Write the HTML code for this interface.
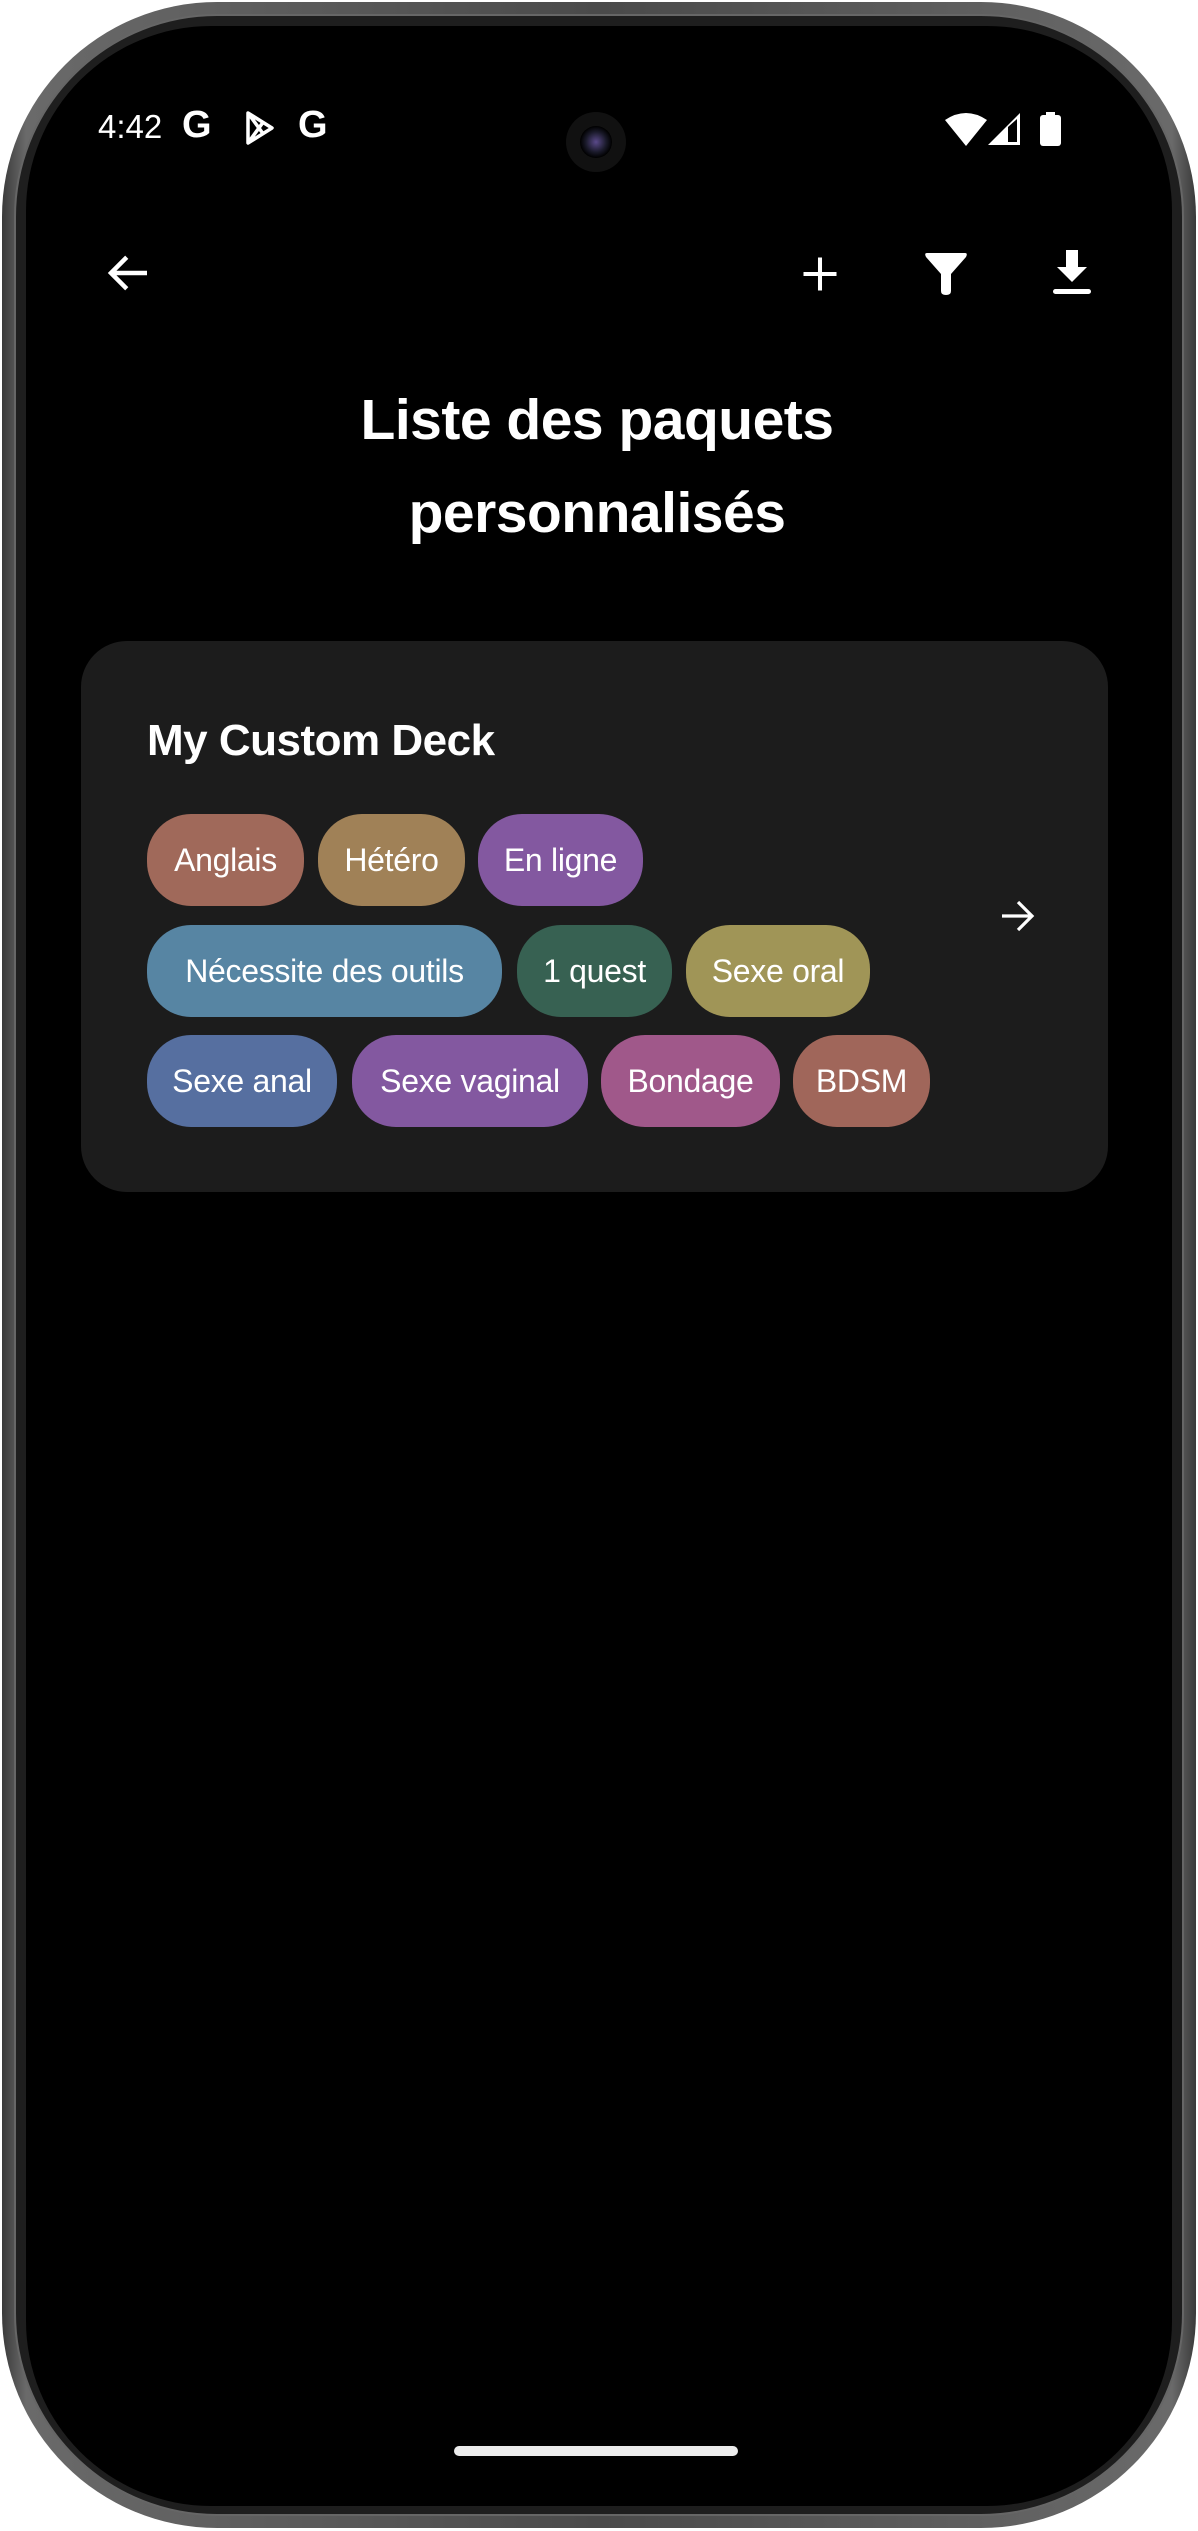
<!DOCTYPE html>
<html><head><meta charset="utf-8"><style>
*{margin:0;padding:0;box-sizing:border-box}
body{width:1198px;height:2531px;background:#fff;position:relative;overflow:hidden;font-family:"Liberation Sans",sans-serif;color:#fff}
.frame{position:absolute;left:2px;top:2px;width:1194px;height:2526px;border-radius:215px;background:linear-gradient(90deg,#3a3a3a,#6a6a6a 2%,#4a4a4a 50%,#6a6a6a 98%,#3a3a3a);}
.frame2{position:absolute;left:14px;top:14px;width:1170px;height:2502px;border-radius:203px;background:#1e1e1e;border:2px solid #666}
.screen{position:absolute;left:26px;top:26px;width:1146px;height:2480px;border-radius:185px;background:#000;overflow:hidden}
.abs{position:absolute}
.chip{position:absolute;height:92px;border-radius:44px;font-size:32px;line-height:92px;text-align:center;color:#fff;letter-spacing:-0.3px}
</style></head><body>
<div class="frame"></div>
<div class="frame2"></div>
<div class="screen"></div>
<!-- status bar -->
<div class="abs" style="left:98px;top:108px;font-size:33px;">4:42</div>
<div class="abs" style="left:182px;top:104px;font-size:38px;font-weight:bold">G</div>
<svg class="abs" style="left:244px;top:110px" width="32" height="36" viewBox="0 0 32 36"><path d="M4 3 L28 18 L4 33 Z M4 3 L20 25 M4 33 L20 11" fill="none" stroke="#fff" stroke-width="3.5" stroke-linejoin="round"/></svg>
<div class="abs" style="left:298px;top:104px;font-size:38px;font-weight:bold">G</div>
<div class="abs" style="left:566px;top:112px;width:60px;height:60px;border-radius:50%;background:#111;"></div>
<div class="abs" style="left:580px;top:126px;width:32px;height:32px;border-radius:50%;background:radial-gradient(circle,#5a4a8a 0,#1a1a2a 45%,#000 70%);"></div>
<svg class="abs" style="left:945px;top:112px" width="42" height="34" viewBox="0 0 42 34"><path d="M0 8 Q21 -6 42 8 L21 34 Z" fill="#fff"/></svg>
<svg class="abs" style="left:988px;top:113px" width="33" height="33" viewBox="0 0 33 33"><path d="M32 0 L32 32 L0 32 Z" fill="#fff"/><path d="M20 14 L29 6 L29 29 L20 29 Z" fill="#000"/></svg>
<svg class="abs" style="left:1040px;top:112px" width="21" height="34" viewBox="0 0 21 34"><rect x="6" y="0" width="9" height="4" fill="#fff"/><rect x="0" y="3" width="21" height="31" rx="3" fill="#fff"/></svg>
<!-- toolbar -->
<svg class="abs" style="left:102px;top:246px" width="54" height="54" viewBox="0 0 24 24"><path d="M20 12H4.5M11 5l-7 7 7 7" fill="none" stroke="#fff" stroke-width="2"/></svg>
<svg class="abs" style="left:798px;top:252px" width="44" height="44" viewBox="0 0 24 24"><path d="M12 3v18M3 12h18" stroke="#fff" stroke-width="2.2"/></svg>
<svg class="abs" style="left:925px;top:252px" width="42" height="43" viewBox="0 0 42 43"><path d="M2 1 H40 Q43 1 41 5 L26 22 V39 Q26 43 21 43 Q16 43 16 39 V22 L1 5 Q-1 1 2 1 Z" fill="#fff"/></svg>
<svg class="abs" style="left:1053px;top:250px" width="38" height="45" viewBox="0 0 38 45"><path d="M13 0 H25 V17 H34 L19 32 L4 17 H13 Z" fill="#fff"/><rect x="0" y="39" width="38" height="5" rx="2.5" fill="#fff"/></svg>
<!-- title -->
<div class="abs" style="left:0;width:1194px;top:374px;text-align:center;font-size:57px;font-weight:bold;line-height:93px;letter-spacing:-0.5px">Liste des paquets<br>personnalisés</div>
<!-- card -->
<div class="abs" style="left:81px;top:641px;width:1027px;height:551px;border-radius:46px;background:#1c1c1c"></div>
<div class="abs" style="left:147px;top:716px;font-size:44px;font-weight:bold;letter-spacing:-0.5px">My Custom Deck</div>
<div class="chip" style="left:147px;top:814px;width:157px;background:#a0695a">Anglais</div>
<div class="chip" style="left:318px;top:814px;width:147px;background:#a08157">Hétéro</div>
<div class="chip" style="left:478px;top:814px;width:165px;background:#8358a0">En ligne</div>
<div class="chip" style="left:147px;top:925px;width:355px;background:#5785a3">Nécessite des outils</div>
<div class="chip" style="left:517px;top:925px;width:155px;background:#376152">1 quest</div>
<div class="chip" style="left:686px;top:925px;width:184px;background:#a09557">Sexe oral</div>
<div class="chip" style="left:147px;top:1035px;width:190px;background:#566fa0">Sexe anal</div>
<div class="chip" style="left:352px;top:1035px;width:236px;background:#8358a0">Sexe vaginal</div>
<div class="chip" style="left:601px;top:1035px;width:179px;background:#a0588a">Bondage</div>
<div class="chip" style="left:793px;top:1035px;width:137px;background:#a0665a">BDSM</div>
<svg class="abs" style="left:994px;top:892px" width="48" height="48" viewBox="0 0 24 24"><path d="M4 12h15M12 5l7 7-7 7" fill="none" stroke="#fff" stroke-width="1.6"/></svg>
<!-- home bar -->
<div class="abs" style="left:454px;top:2446px;width:284px;height:10px;border-radius:5px;background:#ececec"></div>
</body></html>
